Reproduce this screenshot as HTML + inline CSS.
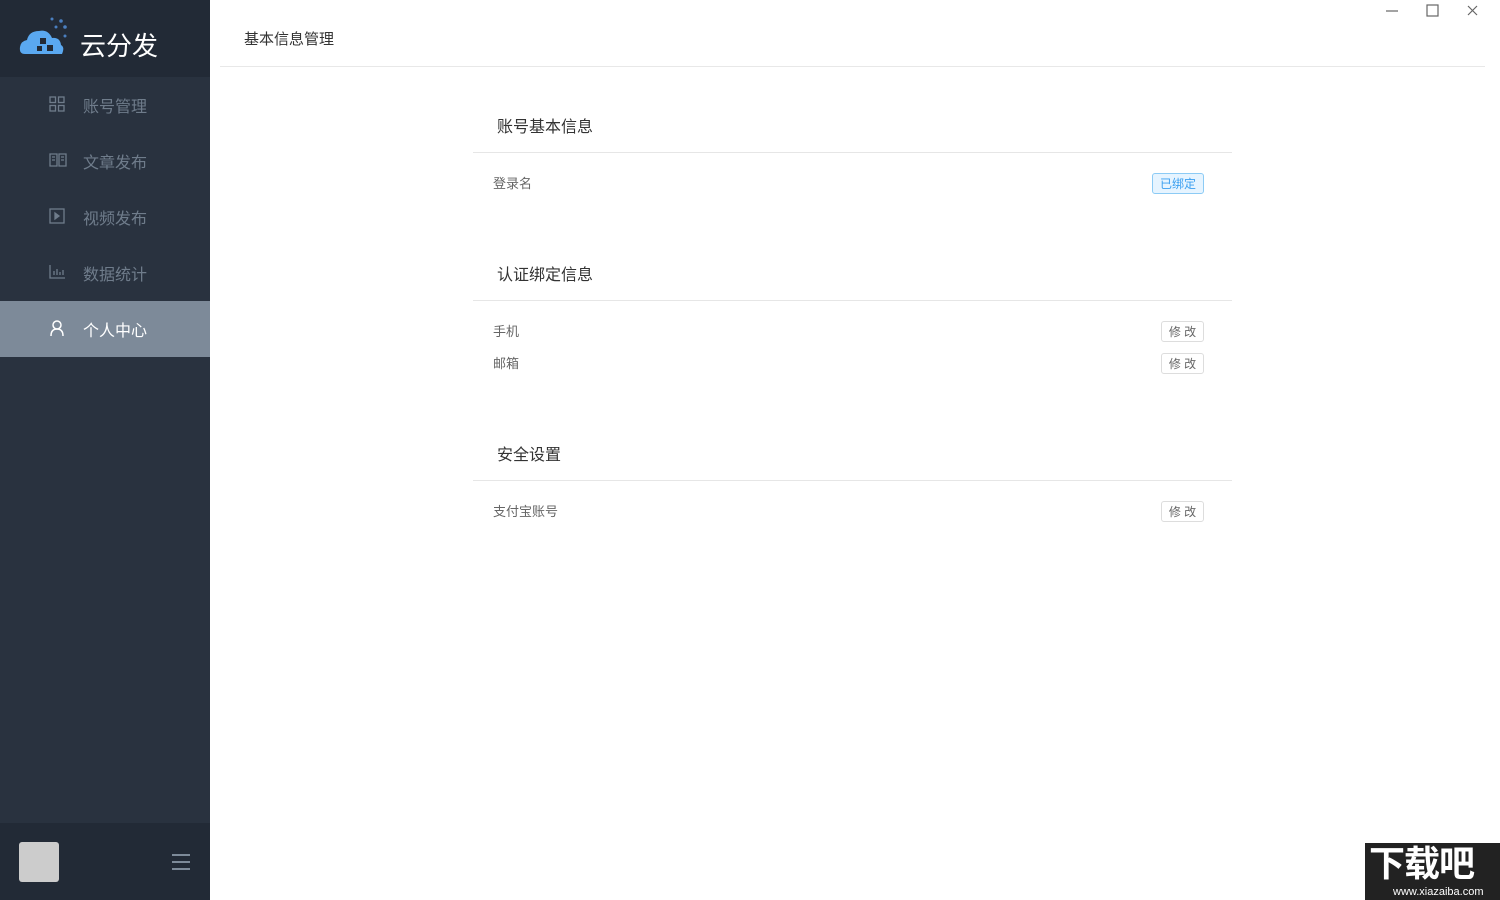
<!DOCTYPE html>
<html><head><meta charset="utf-8"><style>
*{margin:0;padding:0;box-sizing:border-box}
body{width:1500px;height:900px;position:relative;overflow:hidden;background:#fff;font-family:"Liberation Sans","Noto Sans CJK SC",sans-serif}
.side{position:absolute;left:0;top:0;width:210px;height:900px;background:#29323f}
.logo{height:77px;background:#222a36;position:relative}
.logo span{position:absolute;left:80px;top:26px;font-size:26px;color:#fff}
.item{position:absolute;left:0;width:210px;height:56px;color:#6f7c8b;font-size:16px}
.item .t{position:absolute;left:83px;top:16px}
.item svg{position:absolute;left:49px;top:19px}
.act{background:#7d8a99;color:#fff}
.foot{position:absolute;left:0;top:823px;width:210px;height:77px;background:#222a36}
.t1{position:absolute;left:244px;top:28px;font-size:15px;color:#333}
.hl{position:absolute;left:220px;top:66px;width:1265px;height:1px;background:#e8e8e8}
.sec{position:absolute;left:497px;font-size:16px;color:#333}
.ln{position:absolute;left:473px;width:759px;height:1px;background:#e6e6e6}
.lb{position:absolute;left:493px;font-size:13px;color:#666}
.btn{position:absolute;left:1161px;width:43px;height:21px;border:1px solid #ddd;border-radius:3px;font-size:12px;color:#666;text-align:center;line-height:20px}
</style></head><body>
<div class="side">
 <div class="logo">
  <svg width="60" height="50" style="position:absolute;left:18px;top:12px" viewBox="0 0 60 50">
   <path d="M7 42 Q1 42 2 35 Q3 29 9 28 Q11 19 21 19 Q30 17 34 26 Q42 25 43 33 Q47 35 44 42 Z" fill="#5aa8f0"/>
   <rect x="22" y="26" width="6" height="6" fill="#222a36"/><rect x="29" y="33" width="6" height="6" fill="#222a36"/><rect x="19" y="34" width="5" height="5" fill="#222a36"/>
   <circle cx="34" cy="7" r="1.5" fill="#4a7fc0"/><circle cx="43" cy="9" r="1.8" fill="#4a7fc0"/><circle cx="38" cy="15" r="1.5" fill="#4a7fc0"/><circle cx="47" cy="15" r="1.8" fill="#4a7fc0"/><circle cx="47" cy="24" r="1.5" fill="#4a7fc0"/>
  </svg>
  <span>云分发</span>
 </div>
 <div class="item" style="top:77px"><svg width="16" height="16" fill="none" stroke="#6f7c8b" stroke-width="1.3"><rect x="1" y="1" width="5.5" height="5.5"/><rect x="9.5" y="1" width="5.5" height="5.5"/><rect x="1" y="9.5" width="5.5" height="5.5"/><rect x="9.5" y="9.5" width="5.5" height="5.5"/></svg><span class="t">账号管理</span></div>
 <div class="item" style="top:133px"><svg width="18" height="16" fill="none" stroke="#6f7c8b" stroke-width="1.3"><path d="M1 2h7v12H1zM10 2h7v12h-7zM3 5h3M3 8h3M12 5h3M12 8h3"/></svg><span class="t">文章发布</span></div>
 <div class="item" style="top:189px"><svg width="16" height="16" fill="none" stroke="#6f7c8b" stroke-width="1.3"><rect x="1" y="1" width="14" height="14"/><path d="M6 5l4 3-4 3z" fill="#6f7c8b"/></svg><span class="t">视频发布</span></div>
 <div class="item" style="top:245px"><svg width="17" height="16" fill="none" stroke="#6f7c8b" stroke-width="1.3"><path d="M1 1v13h15M5 11V7M8 11V5M11 11V8M14 11V6"/></svg><span class="t">数据统计</span></div>
 <div class="item act" style="top:301px"><svg width="16" height="16" fill="none" stroke="#fff" stroke-width="1.5"><circle cx="8" cy="5" r="4"/><path d="M2 16Q2 9 8 9Q14 9 14 16"/></svg><span class="t">个人中心</span></div>
 <div class="foot">
  <div style="position:absolute;left:19px;top:19px;width:40px;height:40px;background:#ccc;border-radius:3px"></div>
  <div style="position:absolute;left:172px;top:31px;width:18px;height:2px;background:#7d8a99"></div>
  <div style="position:absolute;left:172px;top:38px;width:18px;height:2px;background:#7d8a99"></div>
  <div style="position:absolute;left:172px;top:45px;width:18px;height:2px;background:#7d8a99"></div>
 </div>
</div>
<svg width="110" height="20" style="position:absolute;left:1380px;top:2px" fill="none" stroke="#666" stroke-width="1.2"><path d="M6 9h12"/><rect x="47" y="3" width="11" height="11"/><path d="M88 4l9 9M97 4l-9 9"/></svg>
<div class="t1">基本信息管理</div>
<div class="hl"></div>
<div class="sec" style="top:113px">账号基本信息</div>
<div class="ln" style="top:152px"></div>
<div class="lb" style="top:173px">登录名</div>
<div class="btn" style="top:173px;left:1152px;width:52px;border-color:#8ccbf5;background:#e6f4ff;color:#3a9ff0">已绑定</div>
<div class="sec" style="top:261px">认证绑定信息</div>
<div class="ln" style="top:300px"></div>
<div class="lb" style="top:321px">手机</div>
<div class="btn" style="top:321px">修 改</div>
<div class="lb" style="top:353px">邮箱</div>
<div class="btn" style="top:353px">修 改</div>
<div class="sec" style="top:441px">安全设置</div>
<div class="ln" style="top:480px"></div>
<div class="lb" style="top:501px">支付宝账号</div>
<div class="btn" style="top:501px">修 改</div>
<div style="position:absolute;left:1365px;top:843px;width:135px;height:57px;background:#222;color:#fff">
 <div style="position:absolute;left:4px;top:0px;font-size:36px;font-weight:bold;letter-spacing:-1px;line-height:42px">下载吧</div>
 <div style="position:absolute;left:28px;top:43px;font-size:11px">www.xiazaiba.com</div>
</div>
</body></html>
